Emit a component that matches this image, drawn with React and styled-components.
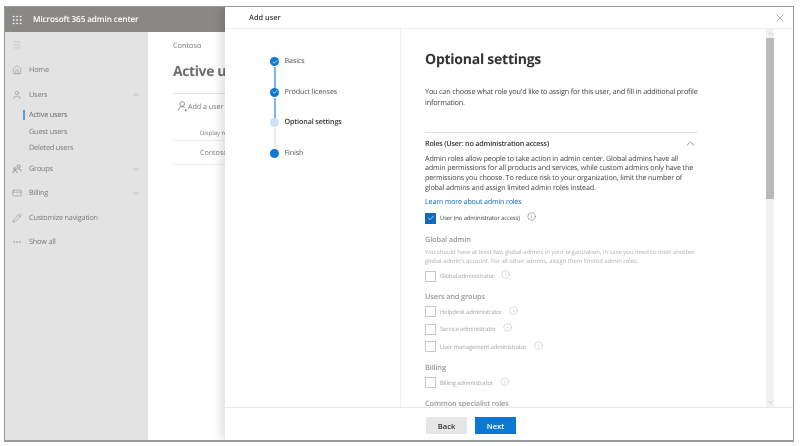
import React from 'react'
import styled, { createGlobalStyle } from 'styled-components'
import { Home, User, CreditCard, Pencil, MoreHorizontal, ChevronUp, ChevronDown, Info, X, Check, Grip, Menu } from 'lucide-react'

const Global = createGlobalStyle`
  html, body { margin: 0; background: #fff; }
  body { font-family: "Open Sans", "Liberation Sans", sans-serif; text-rendering: geometricPrecision; }
  * { box-sizing: border-box; }
`

const Frame = styled.div`
  position: relative;
  width: 790px;
  height: 436px;
  margin: 6px 0 0 4px;
  border: 1px solid #9a9a9a;
  border-bottom-width: 2px;
  overflow: hidden;
  display: flex;
  flex-direction: column;
  filter: blur(0.25px);
`

const TopBar = styled.header`
  height: 25px;
  flex: none;
  background: #8a8886;
  color: #fff;
  display: flex;
  align-items: center;
  padding-left: 6px;
  gap: 10px;
  font-size: 8.2px;
  font-weight: 600;
  letter-spacing: -0.12px;
`

const Body = styled.div`
  flex: 1;
  display: flex;
  min-height: 0;
`

const Sidebar = styled.nav`
  width: 143px;
  flex: none;
  background: #e3e3e3;
  color: #7b7b7b;
  font-size: 7.3px;
  letter-spacing: -0.2px;
`

const Burger = styled.div`
  height: 26px;
  padding-left: 7px;
  display: flex;
  align-items: center;
  color: #a8a8a8;
`

const NavRow = styled.div`
  height: 24.5px;
  display: flex;
  align-items: center;
  padding: 0 7px;
  gap: 7px;
`

const NavLabel = styled.span`
  flex: 1;
`

const SubRow = styled.div`
  position: relative;
  height: 16.5px;
  padding-left: 24px;
  display: flex;
  align-items: center;
  color: ${p => (p.$active ? '#666' : '#7b7b7b')};
`

const ActiveMark = styled.i`
  position: absolute;
  left: 18px;
  top: 3px;
  width: 2px;
  height: 10px;
  background: #5b9bd5;
`

const Main = styled.main`
  flex: 1;
  padding: 7px 0 0 25px;
  color: #7a7a7a;
  font-size: 7.4px;
  letter-spacing: -0.05px;
  white-space: nowrap;
`

const Crumb = styled.div`
  height: 14px;
  line-height: 14px;
`

const PageTitle = styled.h1`
  margin: 6px 0 0;
  height: 34px;
  font-size: 14px;
  line-height: 26px;
  font-weight: 700;
  letter-spacing: -0.4px;
  color: #6f6f6f;
`

const Toolbar = styled.div`
  border-top: 1px solid #e2e2e2;
  height: 32px;
  padding: 7px 0 0 5px;
  width: 52px;
  display: flex;
  align-items: flex-start;
  font-size: 7.2px;
  line-height: 12px;
`

const TableRow = styled.div`
  width: 52px;
  height: ${p => p.$h}px;
  padding-left: 27px;
  border-bottom: 1px solid #efefef;
  display: flex;
  align-items: center;
  font-size: ${p => p.$size}px;
  overflow: hidden;
`

const Panel = styled.aside`
  position: absolute;
  top: 0;
  right: 0;
  bottom: 0;
  width: 568px;
  background: #fff;
  box-shadow: -4px 0 9px rgba(0, 0, 0, 0.13);
  display: flex;
  flex-direction: column;
`

const PanelHead = styled.div`
  height: 22px;
  flex: none;
  border-bottom: 1px solid #efefef;
  display: flex;
  align-items: center;
  justify-content: space-between;
  padding: 0 7px 0 24px;
  font-size: 7.4px;
  font-weight: 600;
  color: #3a3a3a;
`

const PanelBody = styled.div`
  flex: 1;
  display: flex;
  min-height: 0;
`

const Steps = styled.div`
  width: 176px;
  flex: none;
  border-right: 1px solid #efefef;
  padding: 28px 0 0 45px;
`

const Step = styled.div`
  position: relative;
  height: 30.7px;
  display: flex;
  align-items: flex-start;
  gap: 5.5px;
  font-size: 7.2px;
  letter-spacing: -0.13px;
  line-height: 9px;
  color: ${p => (p.$current ? '#333' : '#555')};
  font-weight: ${p => (p.$current ? 600 : 400)};
`

const Dot = styled.span`
  width: 9px;
  height: 9px;
  border-radius: 50%;
  background: ${p => p.$color};
  flex: none;
  display: flex;
  align-items: center;
  justify-content: center;
  color: #fff;
`

const Connector = styled.i`
  position: absolute;
  left: 3.5px;
  top: 10px;
  width: 2px;
  height: 21px;
  background: ${p => p.$color};
`

const Scroller = styled.div`
  flex: 1;
  display: flex;
  min-width: 0;
`

const Content = styled.div`
  width: 365px;
  flex: none;
  overflow: hidden;
  padding: 21px 0 0 24px;
  color: #444;
`

const Title = styled.h2`
  margin: 0;
  font-size: 14px;
  line-height: 20px;
  font-weight: 700;
  letter-spacing: -0.25px;
  color: #333;
`

const Lead = styled.p`
  margin: 17px 0 0;
  width: 276px;
  line-height: 10.8px;
  font-size: 7.3px;
  letter-spacing: -0.2px;
  color: #444;
`

const Accordion = styled.div`
  margin-top: 23px;
  width: 272px;
  border-top: 1px solid #dedede;
  height: 23px;
  display: flex;
  align-items: center;
  justify-content: space-between;
  font-size: 7.2px;
  font-weight: 600;
  letter-spacing: -0.2px;
  color: #333;
`

const Body2 = styled.p`
  margin: 0;
  width: 272px;
  line-height: 9.7px;
  font-size: 7.2px;
  letter-spacing: -0.16px;
  color: #444;
`

const LearnMore = styled.a`
  display: block;
  margin-top: 3px;
  line-height: 12px;
  font-size: 7.2px;
  letter-spacing: -0.2px;
  color: #0f6cbd;
`

const Option = styled.label`
  display: flex;
  align-items: center;
  height: ${p => p.$h || 17.5}px;
  margin-top: ${p => p.$mt || 0}px;
  gap: 4px;
  font-size: 5.9px;
  letter-spacing: -0.12px;
  color: ${p => (p.$muted ? '#a6a6a6' : '#444')};
`

const Box = styled.span`
  width: 11px;
  height: 11px;
  border: 1px solid ${p => (p.$checked ? '#0f6cbd' : '#c8c8c8')};
  background: ${p => (p.$checked ? '#0f6cbd' : '#fff')};
  color: #fff;
  display: flex;
  align-items: center;
  justify-content: center;
  flex: none;
`

const Tip = styled(Info)`
  margin-left: 3px;
  margin-top: -3px;
  color: ${p => (p.$muted ? '#a6a6a6' : '#444')};
`

const Group = styled.div`
  margin-top: ${p => p.$mt}px;
  line-height: 12px;
  font-size: 7.4px;
  font-weight: 600;
  letter-spacing: -0.15px;
  color: #9a9a9a;
`

const Hint = styled.p`
  margin: 1.5px 0 0;
  width: 271px;
  line-height: 9.3px;
  font-size: 5.9px;
  color: #b0b0b0;
`

const ScrollTrack = styled.div`
  width: 8px;
  flex: none;
  background: #f1f1f1;
  display: flex;
  flex-direction: column;
  align-items: center;
  color: #a0a0a0;
`

const ScrollEnd = styled.div`
  height: 8.5px;
  flex: none;
  display: flex;
  align-items: center;
  justify-content: center;
`

const ScrollThumb = styled.div`
  width: 100%;
  height: 161px;
  background: #b9b9b9;
`

const ScrollGap = styled.div`
  flex: 1;
`

const Footer = styled.footer`
  height: 33px;
  flex: none;
  border-top: 1px solid #e8e8e8;
  padding: 9px 0 0 201px;
  display: flex;
  gap: 8px;
  align-items: flex-start;
`

const Button = styled.button`
  width: 41px;
  height: 17px;
  padding: 0;
  border: 0;
  font-family: inherit;
  font-size: 7.6px;
  font-weight: 600;
  background: ${p => (p.$primary ? '#0b78d4' : '#e6e6e6')};
  color: ${p => (p.$primary ? '#fff' : '#333')};
`

const GroupsIcon = () => (
  <svg width="10" height="10" viewBox="0 0 12 12" fill="none" stroke="#7b7b7b" strokeWidth="0.9">
    <circle cx="8" cy="3" r="1.9" />
    <circle cx="3.6" cy="6" r="1.5" />
    <path d="M1 11c0-2 1-3 2.6-3s2.4 1 2.6 3M7 6.2c2.4-.6 3.8.6 4 2.8" />
  </svg>
)

const AddUserIcon = () => (
  <svg width="10" height="11" viewBox="0 0 10 11" fill="none" stroke="#7a7a7a" strokeWidth="0.8">
    <circle cx="4.2" cy="3" r="2.4" />
    <path d="M.6 9.5c0-2.5 1.4-4 3.6-4 1.1 0 2 .4 2.6 1.2M7.8 8v2.4M6.6 9.2H9" />
  </svg>
)

const stepsData = [
  { label: 'Basics', done: true, line: '#7fb5e6' },
  { label: 'Product licenses', done: true, line: '#7fb5e6' },
  { label: 'Optional settings', current: true, line: '#ececec' },
  { label: 'Finish' },
]

const Opt = ({ label, checked, muted, h, mt }) => (
  <Option $muted={muted} $h={h} $mt={mt}>
    <Box $checked={checked}>{checked && <Check size={8} strokeWidth={2} />}</Box>
    {label}
    <Tip size={9} strokeWidth={1} $muted={muted} />
  </Option>
)

export default function App() {
  return (
    <>
      <Global />
      <Frame>
        <TopBar>
          <Grip size={12} strokeWidth={1.6} />
          Microsoft 365 admin center
        </TopBar>
        <Body>
          <Sidebar>
            <Burger><Menu size={10} strokeWidth={1} /></Burger>
            <NavRow>
              <Home size={10} strokeWidth={1.1} />
              <NavLabel>Home</NavLabel>
            </NavRow>
            <NavRow>
              <User size={10} strokeWidth={1.1} />
              <NavLabel>Users</NavLabel>
              <ChevronUp size={10} strokeWidth={1} />
            </NavRow>
            <SubRow $active><ActiveMark />Active users</SubRow>
            <SubRow>Guest users</SubRow>
            <SubRow>Deleted users</SubRow>
            <NavRow>
              <GroupsIcon />
              <NavLabel>Groups</NavLabel>
              <ChevronDown size={10} strokeWidth={1} />
            </NavRow>
            <NavRow>
              <CreditCard size={10} strokeWidth={1.1} />
              <NavLabel>Billing</NavLabel>
              <ChevronDown size={10} strokeWidth={1} />
            </NavRow>
            <NavRow>
              <Pencil size={10} strokeWidth={1.1} />
              <NavLabel>Customize navigation</NavLabel>
            </NavRow>
            <NavRow>
              <MoreHorizontal size={10} strokeWidth={1} />
              <NavLabel>Show all</NavLabel>
            </NavRow>
          </Sidebar>
          <Main>
            <Crumb>Contoso</Crumb>
            <PageTitle>Active users</PageTitle>
            <Toolbar><AddUserIcon />Add a user</Toolbar>
            <TableRow $h={16} $size={6}>Display name</TableRow>
            <TableRow $h={24} $size={7.2}>Contoso</TableRow>
          </Main>
        </Body>
        <Panel>
          <PanelHead>
            Add user
            <X size={12} strokeWidth={1.1} color="#666" />
          </PanelHead>
          <PanelBody>
            <Steps>
              {stepsData.map(s => (
                <Step key={s.label} $current={s.current}>
                  <Dot $color={s.current ? '#cce2f5' : '#0b78d4'}>
                    {s.done && <Check size={6} strokeWidth={3} />}
                  </Dot>
                  {s.line && <Connector $color={s.line} />}
                  {s.label}
                </Step>
              ))}
            </Steps>
            <Scroller>
              <Content>
                <Title>Optional settings</Title>
                <Lead>You can choose what role you'd like to assign for this user, and fill in additional profile information.</Lead>
                <Accordion>
                  Roles (User: no administration access)
                  <ChevronUp size={13} strokeWidth={1.2} color="#555" />
                </Accordion>
                <Body2>
                  Admin roles allow people to take action in admin center. Global admins have all admin permissions for all products and services, while custom admins only have the permissions you choose. To reduce risk to your organization, limit the number of global admins and assign limited admin roles instead.
                </Body2>
                <LearnMore>Learn more about admin roles</LearnMore>
                <Opt label="User (no administrator access)" checked h={16} mt={2} />
                <Group $mt={8}>Global admin</Group>
                <Hint>You should have at least two global admins in your organization, in case you need to reset another global admin's account. For all other admins, assign them limited admin roles.</Hint>
                <Opt label="Global administrator" muted mt={1} />
                <Group $mt={6}>Users and groups</Group>
                <Opt label="Helpdesk administrator" muted />
                <Opt label="Service administrator" muted />
                <Opt label="User management administrator" muted />
                <Group $mt={6.5}>Billing</Group>
                <Opt label="Billing administrator" muted />
                <Group $mt={6.5}>Common specialist roles</Group>
              </Content>
              <ScrollTrack>
                <ScrollEnd><ChevronUp size={7} strokeWidth={1.5} /></ScrollEnd>
                <ScrollThumb />
                <ScrollGap />
                <ScrollEnd><ChevronDown size={7} strokeWidth={1.5} /></ScrollEnd>
              </ScrollTrack>
            </Scroller>
          </PanelBody>
          <Footer>
            <Button>Back</Button>
            <Button $primary>Next</Button>
          </Footer>
        </Panel>
      </Frame>
    </>
  )
}
